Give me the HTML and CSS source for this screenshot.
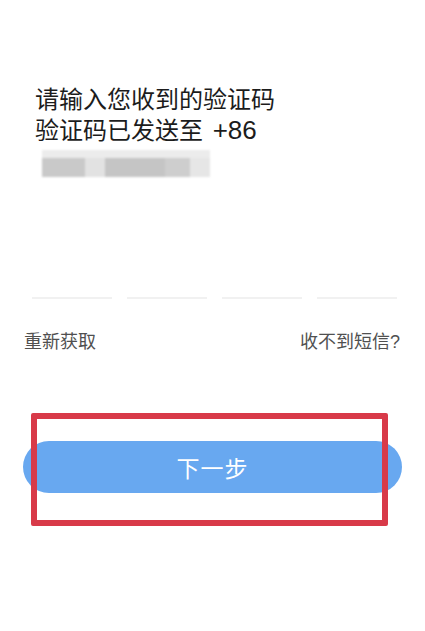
FILE: index.html
```html
<!DOCTYPE html>
<html lang="zh-CN">
<head>
<meta charset="utf-8">
<link rel="stylesheet" href="styles.css">
</head>
<body>
<div class="page">
  <div class="heading">
    <div class="line">请输入您收到的验证码</div>
    <div class="line">验证码已发送至 <span class="cc">+86</span></div>
    <div class="masked">
      <div class="mask-top"></div>
      <div class="mask-row">
        <span class="m m1"></span><span class="m m2"></span><span class="m m3"></span><span class="m m4"></span><span class="m m5"></span>
      </div>
    </div>
  </div>
  <div class="code-inputs">
    <span class="slot"></span><span class="slot"></span><span class="slot"></span><span class="slot"></span>
  </div>
  <div class="links">
    <span class="link">重新获取</span>
    <span class="link">收不到短信?</span>
  </div>
  <div class="action">
    <button class="next">下一步</button>
    <div class="highlight"></div>
  </div>
</div>
</body>
</html>
```
FILE: styles.css
```css
html, body {
  margin: 0;
  padding: 0;
  background: #ffffff;
}
body {
  font-family: "Liberation Sans", "Noto Sans CJK SC", sans-serif;
  width: 425px;
  height: 631px;
  overflow: hidden;
}
.page {
  display: flex;
  flex-direction: column;
}
.heading {
  padding: 84px 0 0 35px;
}
.line {
  font-size: 24px;
  line-height: 31px;
  height: 31px;
  color: #1c1c1c;
}
.cc {
  font-size: 26px;
  margin-left: 3px;
}
.masked {
  margin: 4px 0 0 7px;
  width: 168px;
  filter: blur(1px);
}
.mask-top {
  height: 8px;
  background: #ececec;
}
.mask-row {
  display: flex;
  height: 19px;
}
.m { display: block; height: 100%; }
.m1 { width: 43px; background: #c9c9c9; }
.m2 { width: 20px; background: #e2e2e2; }
.m3 { width: 60px; background: #c5c5c5; }
.m4 { width: 25px; background: #cecece; }
.m5 { width: 20px; background: #e6e6e6; }
.code-inputs {
  display: grid;
  grid-template-columns: repeat(4, 1fr);
  column-gap: 15px;
  padding: 0 28px 0 32px;
  margin-top: 120px;
}
.slot {
  display: block;
  height: 2px;
  background: #f1f1f1;
}
.links {
  display: flex;
  justify-content: space-between;
  padding: 0 25px 0 24px;
  margin-top: 31px;
}
.link {
  font-size: 18px;
  line-height: 24px;
  color: #505050;
}
.action {
  position: relative;
  padding: 0 23px;
  margin-top: 87px;
}
.next {
  display: block;
  width: 100%;
  height: 52px;
  border: none;
  border-radius: 26px;
  background: #68a8f0;
  color: #ffffff;
  font-family: "Liberation Sans", "Noto Sans CJK SC", sans-serif;
  font-size: 23px;
  letter-spacing: 1px;
  padding: 0;
}
.highlight {
  position: absolute;
  left: 31px;
  top: -28px;
  width: 357px;
  height: 113px;
  box-sizing: border-box;
  border: 6px solid #d83a49;
  border-radius: 2px;
}
```
